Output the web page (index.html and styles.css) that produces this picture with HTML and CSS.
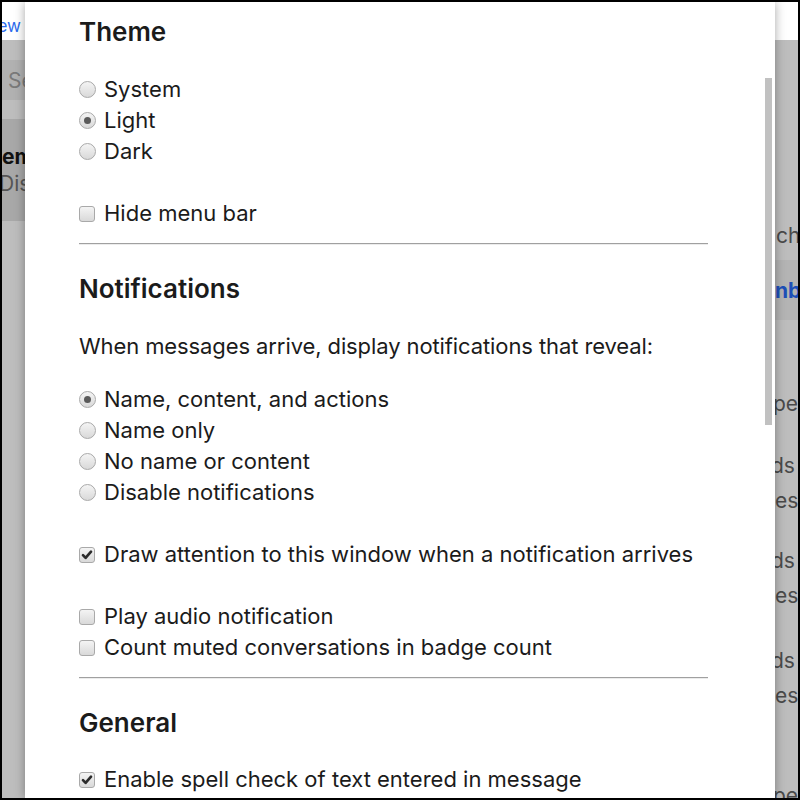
FILE: index.html
```html
<!DOCTYPE html>
<html lang="en">
<head>
<meta charset="utf-8">
<title>Preferences</title>
<link rel="stylesheet" href="styles.css">
</head>
<body>
<div class="frame">
  <aside class="backdrop backdrop-left">
    <div class="bd-header"><span class="bd-link">View</span></div>
    <div class="bd-gap"></div>
    <div class="bd-search"><span class="bd-placeholder">Search</span></div>
    <div class="bd-gap bd-gap-small"></div>
    <div class="bd-selected">
      <div class="bd-title">ems</div>
      <div class="bd-sub">Disabled</div>
    </div>
  </aside>

  <main class="modal">
    <div class="modal-content">
      <section class="section">
        <h2 class="section-title">Theme</h2>
        <div class="group">
          <label class="option"><span class="radio"></span>System</label>
          <label class="option"><span class="radio is-checked"></span>Light</label>
          <label class="option"><span class="radio"></span>Dark</label>
        </div>
        <div class="group group-last">
          <label class="option"><span class="checkbox"></span>Hide menu bar</label>
        </div>
      </section>
      <div class="divider"></div>
      <section class="section">
        <h2 class="section-title">Notifications</h2>
        <p class="description">When messages arrive, display notifications that reveal:</p>
        <div class="group">
          <label class="option"><span class="radio is-checked"></span>Name, content, and actions</label>
          <label class="option"><span class="radio"></span>Name only</label>
          <label class="option"><span class="radio"></span>No name or content</label>
          <label class="option"><span class="radio"></span>Disable notifications</label>
        </div>
        <div class="group">
          <label class="option"><span class="checkbox is-checked"><svg viewBox="0 0 16 16" aria-hidden="true"><path d="M3.4 8.2 L6.4 11.4 L12.6 4.2" /></svg></span>Draw attention to this window when a notification arrives</label>
        </div>
        <div class="group group-last">
          <label class="option"><span class="checkbox"></span>Play audio notification</label>
          <label class="option"><span class="checkbox"></span>Count muted conversations in badge count</label>
        </div>
      </section>
      <div class="divider"></div>
      <section class="section">
        <h2 class="section-title">General</h2>
        <div class="group">
          <label class="option"><span class="checkbox is-checked"><svg viewBox="0 0 16 16" aria-hidden="true"><path d="M3.4 8.2 L6.4 11.4 L12.6 4.2" /></svg></span>Enable spell check of text entered in message</label>
        </div>
      </section>
    </div>
    <div class="scrollbar"><div class="scrollbar-thumb"></div></div>
  </main>

  <aside class="backdrop backdrop-right">
    <div class="bd-header"></div>
    <div class="bd-list">
      <div class="bd-line bd-l1">chats</div>
      <div class="bd-band"><span class="bd-strong">nbox</span></div>
      <div class="bd-line bd-l2">pe</div>
      <div class="bd-line bd-l3">ds</div>
      <div class="bd-line bd-l4">es</div>
      <div class="bd-line bd-l5">ds</div>
      <div class="bd-line bd-l4">es</div>
      <div class="bd-line bd-l7">ds</div>
      <div class="bd-line bd-l4">es</div>
      <div class="bd-line bd-l6">pe</div>
    </div>
  </aside>
</div>
</body>
</html>
```

FILE: styles.css
```css
html, body {
  margin: 0;
  padding: 0;
  background: #000;
}

.frame {
  margin: 2px;
  width: 796px;
  height: 796px;
  overflow: hidden;
  display: flex;
  background: #bdbdbd;
  font-family: Inter, "Noto Sans", "DejaVu Sans", sans-serif;
}

/* ---------- dimmed app behind the dialog ---------- */
.backdrop {
  flex: 0 0 23px;
  overflow: hidden;
  white-space: nowrap;
  background: #bdbdbd;
  color: #555;
  font-size: 21px;
}

.bd-header {
  height: 38px;
  background: #fff;
  display: flex;
  align-items: center;
  justify-content: flex-end;
}

.bd-link {
  color: #2c6bed;
  font-size: 17px;
  padding-top: 10px;
  margin-right: 4px;
}

.bd-gap { height: 20px; }
.bd-gap-small { height: 19px; }

.bd-search {
  height: 40px;
  background: #b1b1b1;
  display: flex;
  align-items: center;
}

.bd-placeholder {
  color: #7a7a7a;
  margin-left: 6px;
}

.bd-selected {
  height: 102px;
  background: #a8a8a8;
  padding-top: 25px;
  box-sizing: border-box;
}

.bd-title {
  color: #111;
  font-weight: 700;
  line-height: 26px;
  margin-left: 0;
}

.bd-sub {
  color: #555;
  line-height: 28px;
  margin-left: -3px;
}

.backdrop-right .bd-header { height: 38px; }

.bd-list {
  padding-top: 180px;
}

.bd-line {
  line-height: 31px;
  height: 31px;
  color: #4a4a4a;
}

.bd-l1 { margin-left: 1px; }

.bd-band {
  margin-top: 9px;
  height: 60px;
  background: #b4b4b4;
  display: flex;
  align-items: center;
}

.bd-strong {
  color: #1d4fb8;
  font-weight: 700;
}

.bd-l2 { margin-top: 68px; margin-left: -2px; }
.bd-l3 { margin-top: 31px; margin-left: -4px; }
.bd-l4 { margin-top: 4px; margin-left: 0; }
.bd-l5 { margin-top: 29px; margin-left: -4px; }
.bd-l7 { margin-top: 34px; margin-left: -4px; }
.bd-l6 { margin-top: 69px; margin-left: -2px; }

/* ---------- dialog ---------- */
.modal {
  flex: 0 0 750px;
  background: #fff;
  display: flex;
  box-shadow: 0 0 10px rgba(0, 0, 0, 0.35);
  position: relative;
  z-index: 1;
  color: #1b1b1b;
}

.modal-content {
  width: 629px;
  padding: 15px 0 0 54px;
  flex: 0 0 auto;
}

.section-title {
  margin: 0;
  font-size: 26px;
  line-height: 30px;
  font-weight: 600;
  color: #1b1b1b;
}

.section .section-title { margin-bottom: 27px; }

.description {
  margin: 0;
  font-size: 22px;
  letter-spacing: -0.1px;
  line-height: 31px;
}

.section .description { margin-top: 0; margin-bottom: 22px; }

.group {
  display: flex;
  flex-direction: column;
  margin-bottom: 31px;
}

.group-last { margin-bottom: 14px; }

.option {
  display: flex;
  align-items: center;
  height: 31px;
  font-size: 22px;
  line-height: 31px;
  white-space: nowrap;
}

.radio,
.checkbox {
  flex: 0 0 auto;
  box-sizing: border-box;
  width: 17px;
  height: 17px;
  margin-right: 8px;
  border: 1px solid #a9a9a9;
  background: linear-gradient(#f4f4f4, #d9d9d9);
  display: inline-flex;
  align-items: center;
  justify-content: center;
}

.radio {
  border-radius: 50%;
}

.radio.is-checked::after {
  content: "";
  width: 7px;
  height: 7px;
  border-radius: 50%;
  background: #5a5a5a;
}

.checkbox {
  width: 16px;
  height: 16px;
  border-radius: 3px;
  margin-right: 9px;
}

.checkbox svg {
  width: 14px;
  height: 14px;
}

.checkbox svg path {
  fill: none;
  stroke: #2b2b2b;
  stroke-width: 3;
  stroke-linecap: round;
  stroke-linejoin: round;
}

.divider {
  height: 0;
  border-top: 1px solid #a0a0a0;
  border-bottom: 1px solid #ececec;
  margin-bottom: 29px;
}

.section:last-child .section-title { margin-bottom: 26px; }

.scrollbar {
  margin-left: auto;
  margin-right: 3px;
  width: 7px;
  padding-top: 76px;
}

.scrollbar-thumb {
  height: 347px;
  background: #c1c1c1;
}
```
